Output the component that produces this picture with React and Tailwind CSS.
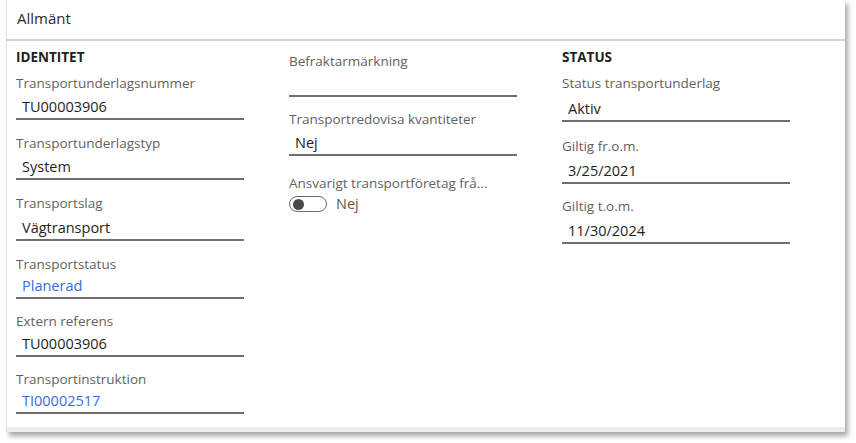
const font = { fontFamily: "'Open Sans', 'Noto Sans', sans-serif" };

function Field({ label, value, link, box = "h-[27px]", gap = "mb-[13px]" }) {
  return (
    <div className={gap}>
      <div className="h-[20px] text-[13.5px] leading-[20px] text-[#626262] truncate">
        {label}
      </div>
      <div
        className={`${box} flex items-end pb-[1px] pl-[6px] border-b-2 border-[#6f6f6f] text-[14.5px] leading-[20px] ${
          link ? "text-[#3a6bdc]" : "text-[#1e1e1e]"
        }`}
      >
        {value}
      </div>
    </div>
  );
}

function Heading({ children }) {
  return (
    <div className="h-[26px] text-[13.5px] font-bold leading-[20px] text-[#222]">
      {children}
    </div>
  );
}

export default function App() {
  return (
    <div className="w-[856px] h-[443px] bg-white" style={font}>
      <div className="ml-[6px] w-[839px] h-[432px] bg-white border-l border-[#e4e4e4] shadow-[3px_4px_5px_rgba(0,0,0,0.35)] flex flex-col">
        <div className="h-[42px] pl-[10px] pt-[8px] border-b-2 border-[#d4d4d4] text-[15px] leading-[20px] text-[#2b2b2b]">
          Allmänt
        </div>

        <div className="flex-1 flex gap-[45px] pl-[9px]">
          <div className="w-[228px] pt-[6px]">
            <Heading>IDENTITET</Heading>
            <Field label="Transportunderlagsnummer" value="TU00003906" />
            <Field label="Transportunderlagstyp" value="System" />
            <Field label="Transportslag" value="Vägtransport" box="h-[28px]" />
            <Field label="Transportstatus" value="Planerad" link box="h-[25px]" gap="mb-[12px]" />
            <Field label="Extern referens" value="TU00003906" box="h-[26px]" gap="mb-[12px]" />
            <Field label="Transportinstruktion" value="TI00002517" link box="h-[25px]" />
          </div>

          <div className="w-[228px] pt-[10px]">
            <Field label="Befraktarmärkning" value="" box="h-[26px]" gap="mb-[12px]" />
            <Field label="Transportredovisa kvantiteter" value="Nej" gap="mb-[17px]" />
            <div>
              <div className="h-[20px] text-[13.5px] leading-[20px] text-[#626262] truncate">
                Ansvarigt transportföretag frå...
              </div>
              <div className="mt-[1px] flex items-center gap-[9px]">
                <div className="w-[38px] h-[16px] rounded-full border border-[#6a6a6a] flex items-center pl-[3px]">
                  <div className="w-[11px] h-[11px] rounded-full bg-[#4a4a4a]" />
                </div>
                <span className="text-[14.5px] leading-[20px] text-[#5a5a5a]">Nej</span>
              </div>
            </div>
          </div>

          <div className="w-[228px] pt-[6px]">
            <Heading>STATUS</Heading>
            <Field label="Status transportunderlag" value="Aktiv" box="h-[29px]" gap="mb-[14px]" />
            <Field label="Giltig fr.o.m." value="3/25/2021" box="h-[28px]" gap="mb-[12px]" />
            <Field label="Giltig t.o.m." value="11/30/2024" box="h-[28px]" />
          </div>
        </div>

        <div className="h-[5px] bg-[#ececec]" />
      </div>
    </div>
  );
}
